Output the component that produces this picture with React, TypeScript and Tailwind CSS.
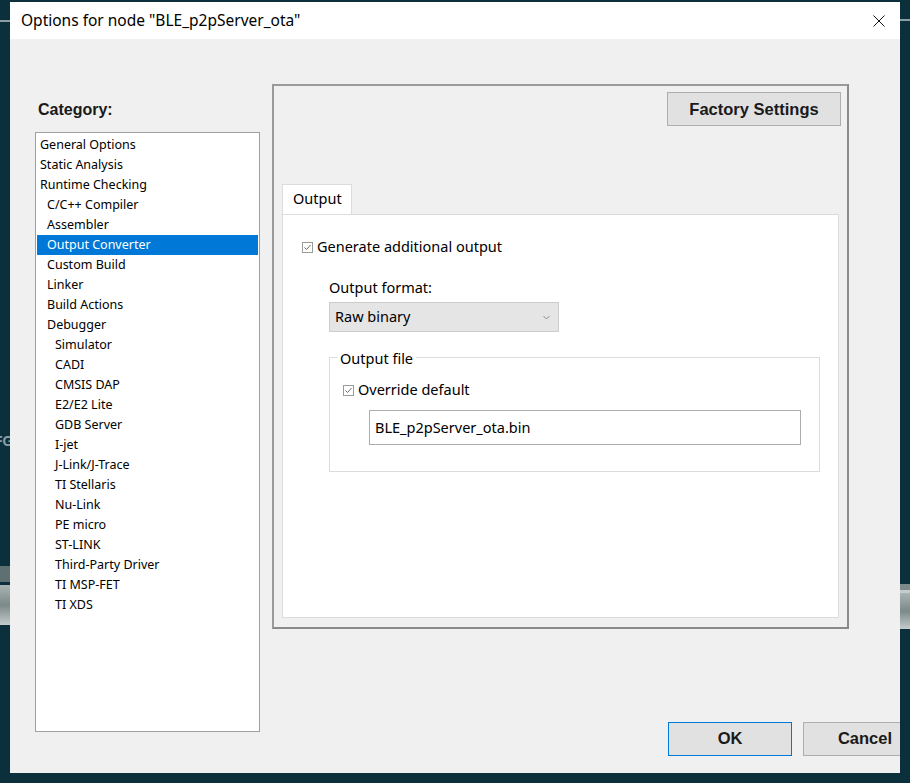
import React from "react";

const ui = { fontFamily: '"Noto Sans", "Open Sans", sans-serif' };
const bold = { fontFamily: '"Liberation Sans", Arial, sans-serif' };

const categories: { label: string; level: number; selected?: boolean }[] = [
    { label: "General Options", level: 0 },
    { label: "Static Analysis", level: 0 },
    { label: "Runtime Checking", level: 0 },
    { label: "C/C++ Compiler", level: 1 },
    { label: "Assembler", level: 1 },
    { label: "Output Converter", level: 1, selected: true },
    { label: "Custom Build", level: 1 },
    { label: "Linker", level: 1 },
    { label: "Build Actions", level: 1 },
    { label: "Debugger", level: 1 },
    { label: "Simulator", level: 2 },
    { label: "CADI", level: 2 },
    { label: "CMSIS DAP", level: 2 },
    { label: "E2/E2 Lite", level: 2 },
    { label: "GDB Server", level: 2 },
    { label: "I-jet", level: 2 },
    { label: "J-Link/J-Trace", level: 2 },
    { label: "TI Stellaris", level: 2 },
    { label: "Nu-Link", level: 2 },
    { label: "PE micro", level: 2 },
    { label: "ST-LINK", level: 2 },
    { label: "Third-Party Driver", level: 2 },
    { label: "TI MSP-FET", level: 2 },
    { label: "TI XDS", level: 2 },
];

function Check() {
    return (
        <span className="w-[11px] h-[11px] border border-[#9a9a9a] bg-white flex items-center justify-center shrink-0">
            <svg width="9" height="9" viewBox="0 0 9 9">
                <path d="M1.5 4.5 L3.5 6.5 L7.5 2" fill="none" stroke="#6a6a6a" strokeWidth="1" />
            </svg>
        </span>
    );
}

export default function App() {
    return (
        <div className="w-[910px] h-[783px] bg-[#0b2f3b] flex overflow-hidden">
            {/* left desktop strip */}
            <div className="w-[10px] shrink-0 flex flex-col overflow-hidden">
                <div className="h-[20px]" />
                <div className="h-[2px] bg-[#8a9ea4]" />
                <div className="h-[412px]" />
                <div className="text-[#8aa0a6] text-[14px] font-bold leading-[14px] -ml-[6px] whitespace-nowrap" style={bold}>FG</div>
                <div className="h-[118px]" />
                <div className="h-[16px] bg-[#5f7072]" />
                <div className="h-[3px]" />
                <div className="h-[40px] bg-gradient-to-b from-[#a9b3b3] via-[#7d8a8a] to-[#c4cccc]" />
            </div>

            {/* dialog */}
            <div className="w-[890px] shrink-0 mt-[2px] h-[771px] bg-[#f0f0f0] flex flex-col overflow-hidden" style={ui}>
                {/* title bar */}
                <div className="h-[37px] bg-white flex items-center shrink-0">
                    <span className="ml-[11px] text-[15.5px] text-black">Options for node "BLE_p2pServer_ota"</span>
                    <svg className="ml-auto mr-[15px]" width="12" height="12" viewBox="0 0 12 12">
                        <path d="M0.5 0.5 L11.5 11.5 M11.5 0.5 L0.5 11.5" stroke="#111" strokeWidth="1" />
                    </svg>
                </div>

                <div className="flex flex-1">
                    {/* category column */}
                    <div className="ml-[25px] w-[225px] shrink-0 flex flex-col">
                        <div className="mt-[61px] ml-[3px] text-[16px] font-bold text-[#1a1a1a] leading-[20px]" style={bold}>
                            Category:
                        </div>
                        <div className="mt-[12px] h-[600px] bg-white border border-[#a0a0a0] pt-[2px] px-[1px]">
                            {categories.map((c) => (
                                <div
                                    key={c.label}
                                    className={
                                        "h-[20px] flex items-center text-[12.5px] whitespace-nowrap " +
                                        (c.selected
                                            ? "bg-[#0078d7] text-white border border-dotted border-[#8b5a2b]"
                                            : "text-black border border-transparent")
                                    }
                                    style={{ paddingLeft: c.level === 0 ? 2 : c.level === 1 ? 9 : 17 }}
                                >
                                    {c.label}
                                </div>
                            ))}
                        </div>
                    </div>

                    {/* right side */}
                    <div className="ml-[12px] flex flex-col shrink-0">
                        <div className="mt-[45px] w-[577px] h-[545px] border-2 border-t-[#9a9a9a] border-l-[#9a9a9a] border-r-[#8a8a8a] border-b-[#8a8a8a] flex flex-col">
                            <div className="flex justify-end pt-[6px] pr-[6px]">
                                <button
                                    className="w-[174px] h-[34px] bg-[#e1e1e1] border border-[#adadad] text-[16.5px] font-bold text-[#1a1a1a]"
                                    style={bold}
                                >
                                    Factory Settings
                                </button>
                            </div>

                            {/* tab control */}
                            <div className="mt-[58px] ml-[8px] mr-[8px] flex flex-col flex-1 mb-[9px]">
                                <div className="flex">
                                    <div className="w-[70px] h-[31px] bg-white border border-b-0 border-[#dcdcdc] flex items-center pl-[10px] pb-[3px] text-[14.5px] text-black">
                                        Output
                                    </div>
                                </div>
                                <div className="flex-1 bg-white border border-[#dcdcdc] -mt-px flex flex-col pl-[19px]">
                                    <div className="mt-[22px] flex items-center gap-[4px] text-[14.5px] text-black h-[20px]">
                                        <Check />
                                        <span>Generate additional output</span>
                                    </div>
                                    <div className="ml-[27px] mt-[20px] text-[14.5px] text-black leading-[20px]">Output format:</div>
                                    <div className="ml-[27px] mt-[5px] w-[230px] h-[30px] bg-[#e5e5e5] border border-[#cccccc] flex items-center pl-[5px] pr-[8px] text-[14.5px] text-black">
                                        <span>Raw binary</span>
                                        <svg className="ml-auto" width="7" height="5" viewBox="0 0 7 5">
                                            <path d="M0.5 1 L3.5 4 L6.5 1" fill="none" stroke="#8a8a8a" strokeWidth="1" />
                                        </svg>
                                    </div>

                                    {/* group box */}
                                    <div className="ml-[27px] mt-[16px] w-[491px] flex flex-col">
                                        <div className="h-[10px] flex items-end">
                                            <div className="w-[8px] border-t border-l border-[#dcdcdc] h-[1px] self-end" />
                                            <span className="px-[3px] text-[14.5px] text-black leading-[20px] -mb-[10px]">Output file</span>
                                            <div className="flex-1 border-t border-r border-[#dcdcdc] h-[1px] self-end" />
                                        </div>
                                        <div className="h-[114px] border border-t-0 border-[#dcdcdc] flex flex-col pl-[13px]">
                                            <div className="mt-[22px] flex items-center gap-[4px] text-[14.5px] text-black h-[20px]">
                                                <Check />
                                                <span>Override default</span>
                                            </div>
                                            <div className="ml-[26px] mt-[10px] w-[432px] h-[35px] border border-[#adadad] bg-white flex items-center pl-[5px] text-[14.5px] text-black">
                                                BLE_p2pServer_ota.bin
                                            </div>
                                        </div>
                                    </div>
                                </div>
                            </div>
                        </div>

                        {/* dialog buttons */}
                        <div className="mt-[93px] flex gap-[11px] ml-[396px]">
                            <button
                                className="w-[124px] h-[34px] shrink-0 bg-[#e1e1e1] border border-[#0078d7] pb-[2px] text-[16.5px] font-bold text-[#1a1a1a]"
                                style={bold}
                            >
                                OK
                            </button>
                            <button
                                className="w-[124px] h-[34px] shrink-0 bg-[#e1e1e1] border border-[#adadad] pb-[2px] text-[16.5px] font-bold text-[#1a1a1a]"
                                style={bold}
                            >
                                Cancel
                            </button>
                        </div>
                    </div>
                </div>
            </div>

            {/* right desktop strip */}
            <div className="w-[10px] shrink-0 flex flex-col">
                <div className="h-[19px]" />
                <div className="h-[2px] bg-[#8a9ea4]" />
                <div className="h-[563px]" />
                <div className="h-[6px] bg-[#7d8a8a]" />
                <div className="h-[3px] bg-[#c4cccc]" />
                <div className="h-[36px] bg-gradient-to-b from-[#a9b3b3] via-[#7d8a8a] to-[#c4cccc]" />
            </div>
        </div>
    );
}
